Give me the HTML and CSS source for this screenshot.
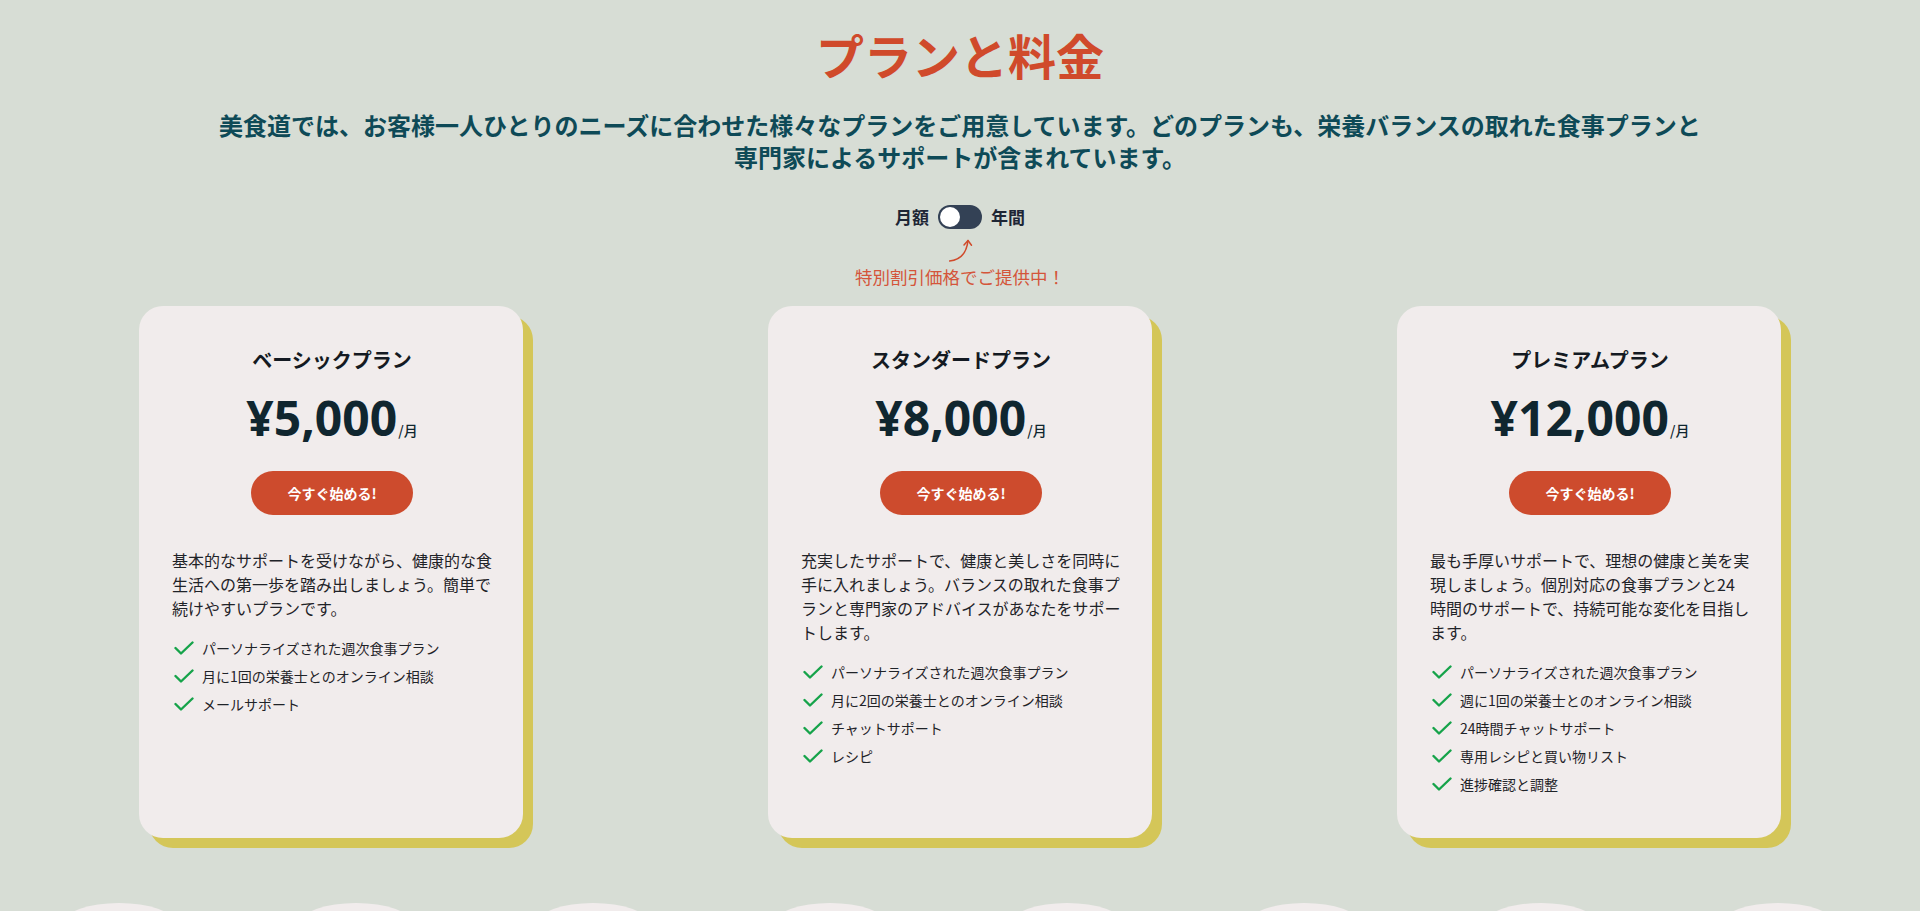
FILE: index.html
```html
<!DOCTYPE html>
<html lang="ja">
<head>
<meta charset="utf-8">
<title>プランと料金</title>
<link rel="stylesheet" href="styles.css">
</head>
<body>
<section class="pricing">
  <h1 class="pricing-title">プランと料金</h1>
  <p class="pricing-lead">美食道では、お客様一人ひとりのニーズに合わせた様々なプランをご用意しています。どのプランも、栄養バランスの取れた食事プランと専門家によるサポートが含まれています。</p>

  <div class="billing">
    <span class="billing-label">月額</span>
    <span class="switch"><span class="switch-knob"></span></span>
    <span class="billing-label">年間</span>
  </div>
  <svg class="note-arrow" width="24" height="24" viewBox="0 0 24 24" fill="none" stroke="#d04a2b" stroke-width="1.5" stroke-linecap="round" stroke-linejoin="round"><path d="M0.5 23 Q17 21.5 19 2.5"/><path d="M15 7 L19 2.5 L22.5 7.2"/></svg>
  <p class="note">特別割引価格でご提供中！</p>

  <div class="cards">
    <article class="card">
      <h2 class="card-title">ベーシックプラン</h2>
      <div class="price">¥5,000<span class="per">/月</span></div>
      <a class="cta">今すぐ始める!</a>
      <p class="desc">基本的なサポートを受けながら、健康的な食生活への第一歩を踏み出しましょう。簡単で続けやすいプランです。</p>
      <ul class="features">
        <li><svg class="check" viewBox="0 0 20 14"><path d="M1.5 7 L7 12.5 L18.5 1.5"/></svg>パーソナライズされた週次食事プラン</li>
        <li><svg class="check" viewBox="0 0 20 14"><path d="M1.5 7 L7 12.5 L18.5 1.5"/></svg>月に1回の栄養士とのオンライン相談</li>
        <li><svg class="check" viewBox="0 0 20 14"><path d="M1.5 7 L7 12.5 L18.5 1.5"/></svg>メールサポート</li>
      </ul>
    </article>

    <article class="card">
      <h2 class="card-title">スタンダードプラン</h2>
      <div class="price">¥8,000<span class="per">/月</span></div>
      <a class="cta">今すぐ始める!</a>
      <p class="desc">充実したサポートで、健康と美しさを同時に手に入れましょう。バランスの取れた食事プランと専門家のアドバイスがあなたをサポートします。</p>
      <ul class="features">
        <li><svg class="check" viewBox="0 0 20 14"><path d="M1.5 7 L7 12.5 L18.5 1.5"/></svg>パーソナライズされた週次食事プラン</li>
        <li><svg class="check" viewBox="0 0 20 14"><path d="M1.5 7 L7 12.5 L18.5 1.5"/></svg>月に2回の栄養士とのオンライン相談</li>
        <li><svg class="check" viewBox="0 0 20 14"><path d="M1.5 7 L7 12.5 L18.5 1.5"/></svg>チャットサポート</li>
        <li><svg class="check" viewBox="0 0 20 14"><path d="M1.5 7 L7 12.5 L18.5 1.5"/></svg>レシピ</li>
      </ul>
    </article>

    <article class="card">
      <h2 class="card-title">プレミアムプラン</h2>
      <div class="price">¥12,000<span class="per">/月</span></div>
      <a class="cta">今すぐ始める!</a>
      <p class="desc">最も手厚いサポートで、理想の健康と美を実現しましょう。個別対応の食事プランと24時間のサポートで、持続可能な変化を目指します。</p>
      <ul class="features">
        <li><svg class="check" viewBox="0 0 20 14"><path d="M1.5 7 L7 12.5 L18.5 1.5"/></svg>パーソナライズされた週次食事プラン</li>
        <li><svg class="check" viewBox="0 0 20 14"><path d="M1.5 7 L7 12.5 L18.5 1.5"/></svg>週に1回の栄養士とのオンライン相談</li>
        <li><svg class="check" viewBox="0 0 20 14"><path d="M1.5 7 L7 12.5 L18.5 1.5"/></svg>24時間チャットサポート</li>
        <li><svg class="check" viewBox="0 0 20 14"><path d="M1.5 7 L7 12.5 L18.5 1.5"/></svg>専用レシピと買い物リスト</li>
        <li><svg class="check" viewBox="0 0 20 14"><path d="M1.5 7 L7 12.5 L18.5 1.5"/></svg>進捗確認と調整</li>
      </ul>
    </article>
  </div>
</section>

<div class="bumps">
  <span class="bump"></span><span class="bump"></span><span class="bump"></span><span class="bump"></span>
  <span class="bump"></span><span class="bump"></span><span class="bump"></span><span class="bump"></span>
</div>
</body>
</html>
```

FILE: styles.css
```css
* { box-sizing: border-box; }

html, body {
  margin: 0;
  padding: 0;
}

body {
  background: #d7ddd5;
  font-family: "Noto Sans CJK JP", "Noto Sans", sans-serif;
  color: #1f2937;
}

.pricing {
  padding-top: 30px;
  display: flex;
  flex-direction: column;
  align-items: center;
}

.pricing-title {
  margin: 0 0 31px;
  font-size: 48px;
  line-height: 48px;
  font-weight: 700;
  color: #d04a2b;
  text-align: center;
}

.pricing-lead {
  margin: 0 0 32px;
  max-width: 1500px;
  font-size: 24px;
  line-height: 32px;
  font-weight: 700;
  color: #0e4a57;
  text-align: center;
}

.billing {
  display: flex;
  align-items: center;
  gap: 9px;
  height: 24px;
}

.billing-label {
  font-size: 17px;
  line-height: 24px;
  font-weight: 600;
  color: #1e2635;
}

.switch {
  width: 44px;
  height: 24px;
  border-radius: 12px;
  background: #334155;
  display: flex;
  align-items: center;
  padding: 0 2px;
}

.switch-knob {
  width: 20px;
  height: 20px;
  border-radius: 50%;
  background: #ffffff;
}

.note-arrow {
  display: block;
  margin-top: 9px;
  margin-left: 2px;
}

.note {
  margin: 3px 0 0;
  font-size: 17.5px;
  line-height: 24px;
  color: #d4553a;
}

.cards {
  margin-top: 17px;
  width: 1642px;
  display: flex;
  justify-content: space-between;
  align-items: stretch;
}

.card {
  width: 384px;
  background: #f1ecec;
  border-radius: 24px;
  box-shadow: 10px 10px 0 #d4c658;
  padding: 40px 31px 44px 33px;
  display: flex;
  flex-direction: column;
  align-items: stretch;
}

.card-title {
  margin: 0;
  font-size: 20px;
  line-height: 28px;
  font-weight: 700;
  color: #141a22;
  text-align: center;
}

.price {
  margin-top: 20px;
  font-family: "Noto Sans", "Noto Sans CJK JP", sans-serif;
  font-size: 48px;
  line-height: 48px;
  font-weight: 700;
  color: #10262f;
  text-align: center;
}

.per {
  font-family: "Noto Sans CJK JP", sans-serif;
  font-size: 14px;
  line-height: 1;
  font-weight: 500;
  margin-left: 1px;
}

.cta {
  align-self: center;
  margin-top: 29px;
  height: 44px;
  padding: 0 36px;
  border-radius: 9999px;
  background: #cd4b2d;
  color: #ffffff;
  font-size: 14px;
  font-weight: 700;
  line-height: 44px;
  text-decoration: none;
  white-space: nowrap;
}

.desc {
  margin: 33px 0 0;
  font-size: 16px;
  line-height: 24px;
  color: #1f2328;
}

.features {
  list-style: none;
  margin: 18px 0 0;
  padding: 0;
  display: flex;
  flex-direction: column;
  gap: 8px;
}

.features li {
  display: flex;
  align-items: center;
  font-size: 14px;
  line-height: 20px;
  color: #1f2328;
}

.check {
  width: 20px;
  height: 14px;
  margin-left: 2px;
  margin-right: 8px;
  flex: none;
  fill: none;
  stroke: #16a34a;
  stroke-width: 2.4;
  stroke-linecap: round;
  stroke-linejoin: round;
}

.bumps {
  margin-top: 65px;
  width: 1896px;
  display: flex;
}

.bump {
  flex: 1 1 0;
  display: flex;
  justify-content: center;
}

.bump::before {
  content: "";
  display: block;
  width: 110px;
  height: 40px;
  border-radius: 50%;
  background: #f1ecec;
}
```
